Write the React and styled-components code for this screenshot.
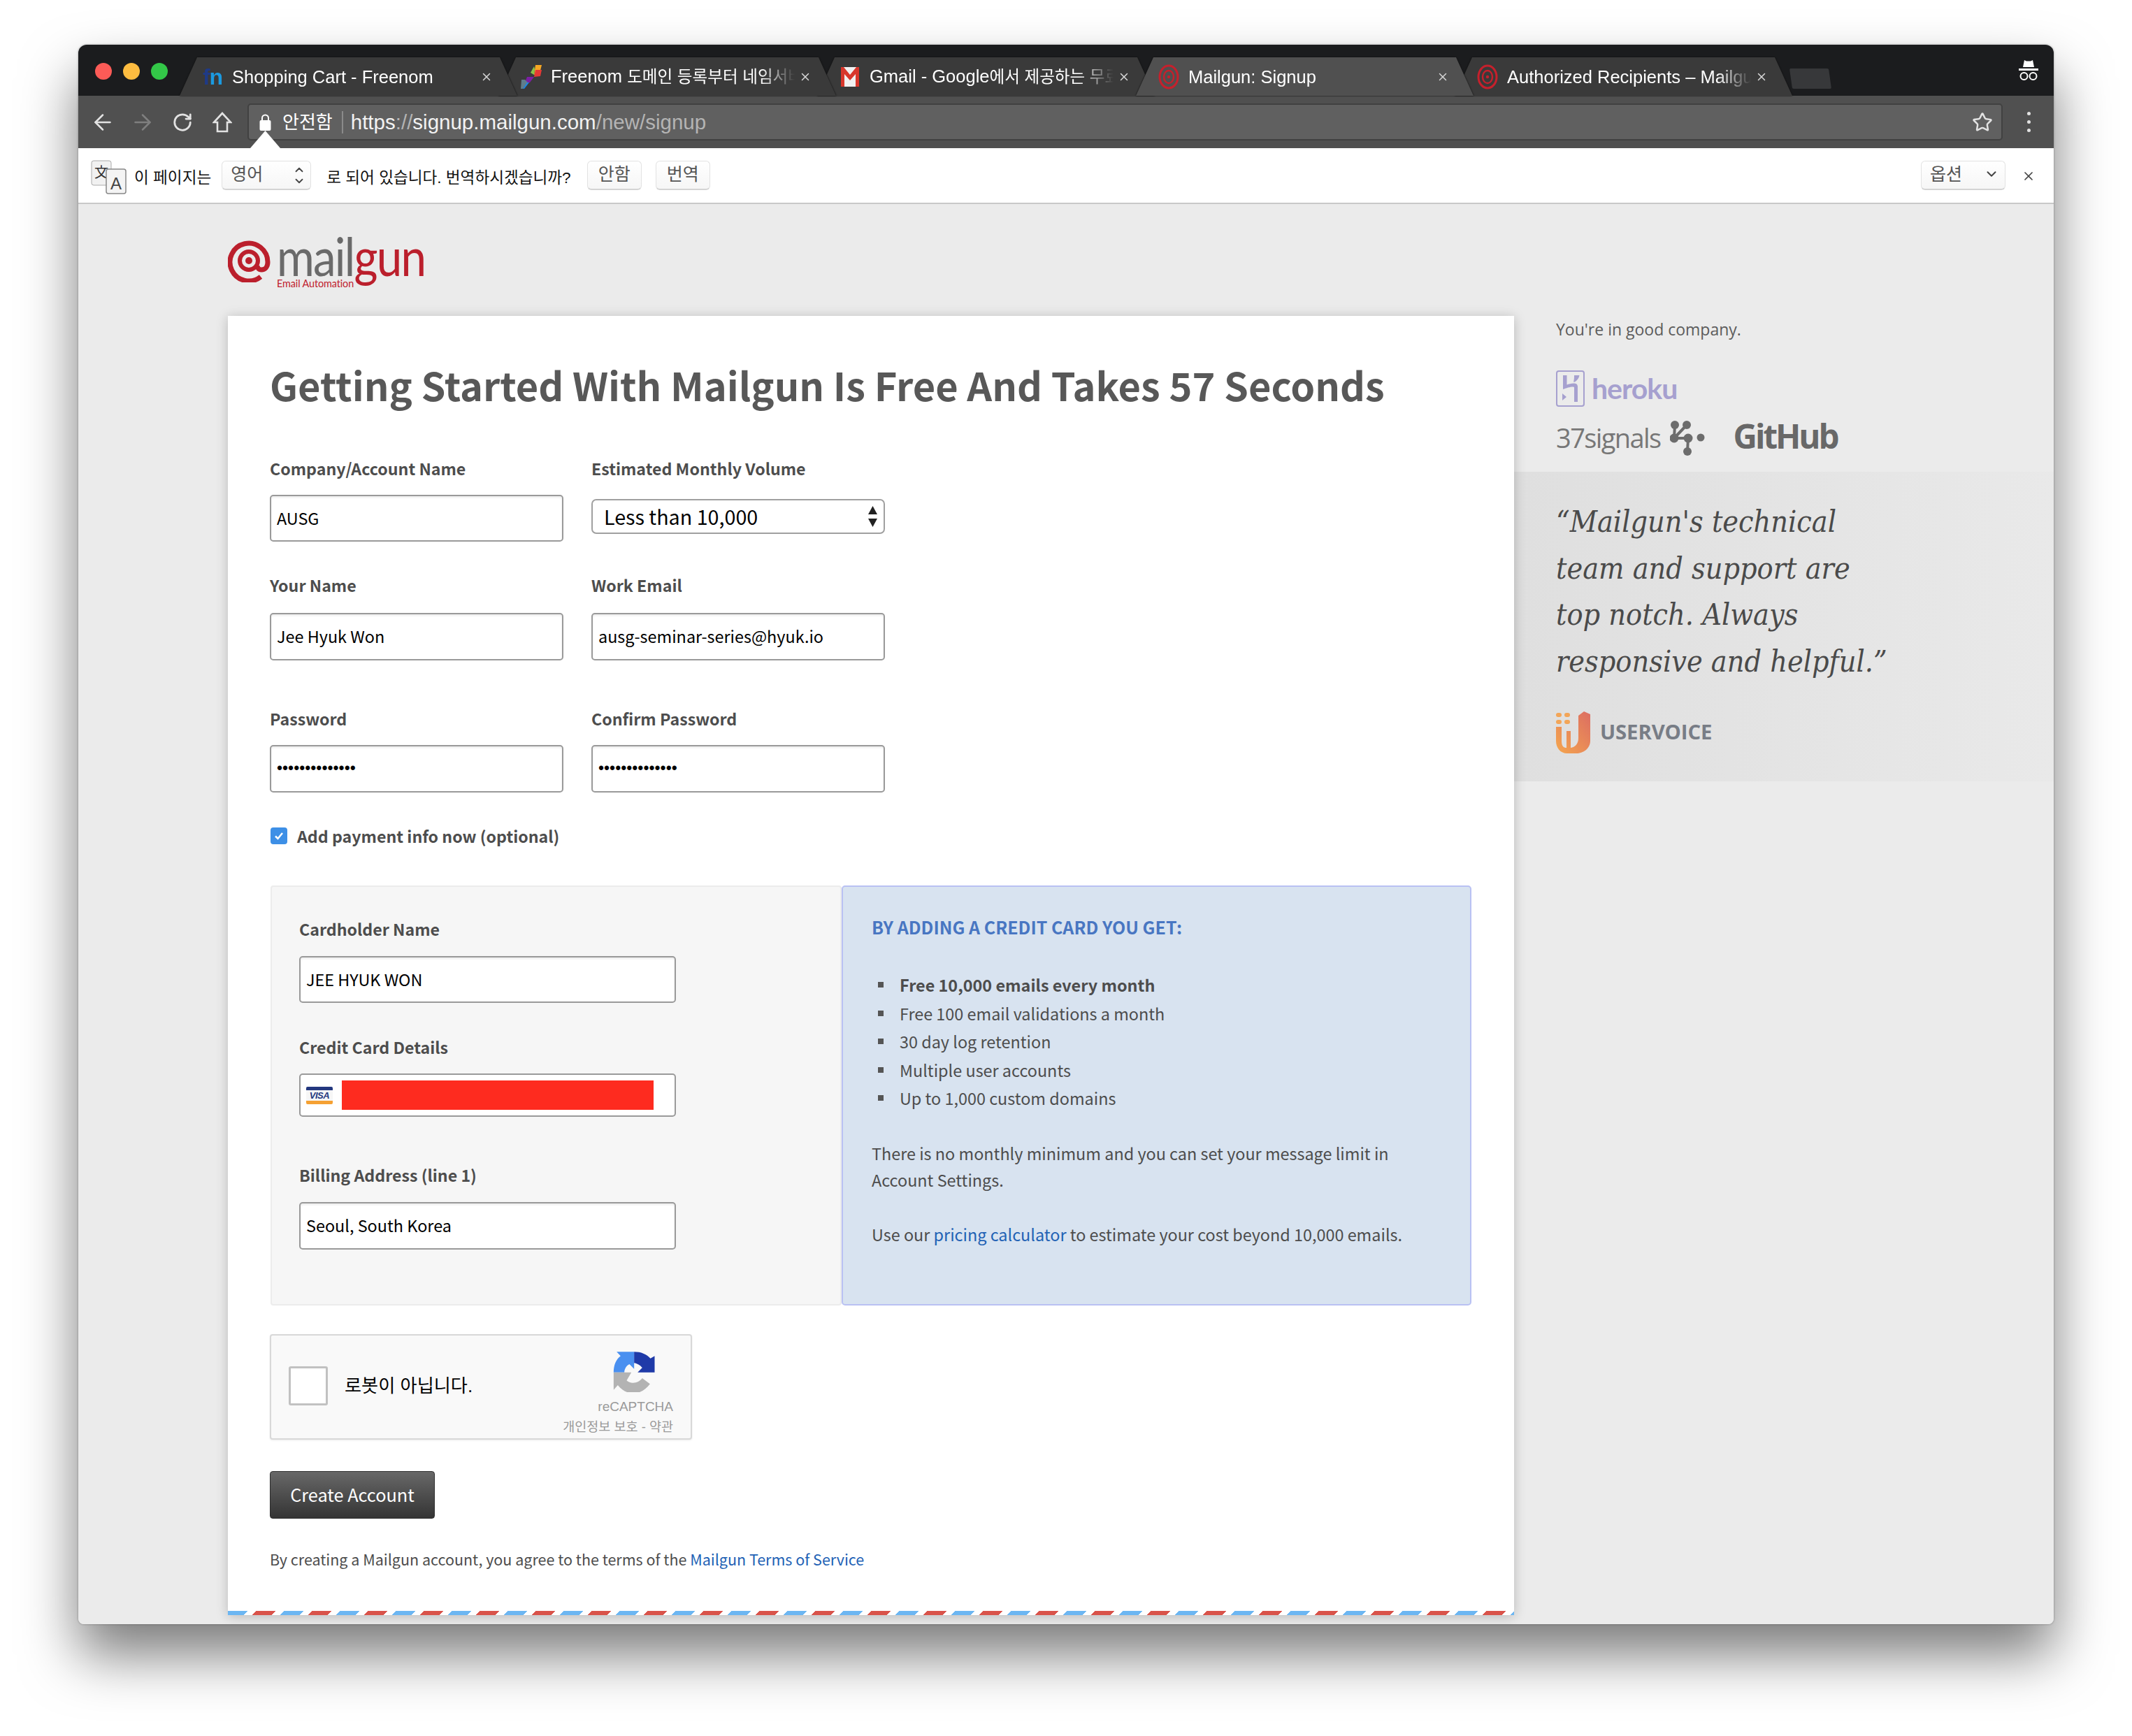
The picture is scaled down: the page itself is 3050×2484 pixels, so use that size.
import React from "react";
import styled, { createGlobalStyle } from "styled-components";
import { ArrowLeft, ArrowRight, RotateCw, Star, ChevronDown, ChevronUp, X } from "lucide-react";

const UI = `"Liberation Sans","Noto Sans CJK KR",sans-serif`;
const SRC = `"Noto Sans CJK KR","Noto Sans",sans-serif`;

const Global = createGlobalStyle`
  html,body{margin:0;padding:0;background:#fff;}
  *{box-sizing:border-box;}
`;
const Stage = styled.div`
  width:3050px;height:2484px;padding:64px 112px 0;overflow:hidden;background:#fff;
`;
const Win = styled.div`
  width:2826px;height:2260px;border-radius:12px 12px 8px 8px;overflow:hidden;position:relative;
  box-shadow:0 44px 80px rgba(0,0,0,.52),0 0 3px rgba(0,0,0,.35);
  background:#e9e9e9;display:flex;flex-direction:column;
`;
const Strip = styled.div`
  height:73px;background:#1b1c1e;display:flex;align-items:flex-end;padding-left:145px;position:relative;flex:none;
`;
const Lights = styled.div`
  position:absolute;left:24px;top:26px;display:flex;gap:16px;
`;
const Light = styled.i`
  display:block;width:24px;height:24px;border-radius:50%;background:${p=>p.$c};
`;
const TabWrap = styled.div`
  width:483px;height:55px;flex:none;margin-left:${p=>p.$first?0:-27}px;position:relative;z-index:${p=>p.$z};
  filter:drop-shadow(0 0 1px #0c0c0c);
`;
const TabBody = styled.div`
  width:100%;height:100%;background:${p=>p.$active?"#505050":"#3a3a3a"};
  clip-path:polygon(0 100%,25px 0,458px 0,483px 100%);
  display:flex;align-items:center;padding:0 35px 0 31px;color:#fff;
  font:25.5px/30px ${UI};
`;
const Fav = styled.div`
  width:32px;height:34px;flex:none;margin-right:12px;display:flex;align-items:center;justify-content:center;position:relative;
`;
const Title = styled.div`
  flex:1;min-width:0;white-space:nowrap;overflow:hidden;
  ${p=>p.$fade?"-webkit-mask-image:linear-gradient(90deg,#000 86%,transparent 100%);mask-image:linear-gradient(90deg,#000 86%,transparent 100%);":""}
`;
const Ko = styled.span`font-size:23.6px;`;
const TabClose = styled(X)`
  width:18px;height:18px;color:#d8d8d8;flex:none;margin-left:6px;
`;
const FnFav = styled.span`
  font:700 32px/34px ${UI};letter-spacing:-1px;color:#1b9ae0;white-space:nowrap;
  & b{color:#1f3a86;font-weight:700;}
`;
const NewTab = styled.div`
  width:56px;height:29px;background:#37383a;transform:skewX(8deg);margin:0 0 10px -2px;flex:none;border-radius:2px;
`;
const Spy = styled.div`
  position:absolute;right:22px;top:22px;width:28px;height:32px;
`;
const Toolbar = styled.div`
  height:75px;background:#505050;flex:none;display:flex;align-items:center;padding-left:6px;position:relative;
`;
const NavBtn = styled.div`
  width:57px;height:40px;display:flex;align-items:center;justify-content:center;color:${p=>p.$dim?"#7f7f7f":"#e2e2e2"};flex:none;
`;
const Omni = styled.div`
  width:2511px;height:53px;margin-left:8px;background:#606060;border:2px solid #414141;border-radius:5px;
  display:flex;align-items:center;padding-left:15px;flex:none;
`;
const LockBox = styled.div`
  width:20px;flex:none;margin-right:13px;display:flex;
`;
const Secure = styled.span`
  font:26px/32px ${UI};color:#fff;padding-right:13px;border-right:2px solid #8a8a8a;margin-right:11px;
`;
const Url = styled.span`
  font:29.5px/34px ${UI};color:#b4b4b4;white-space:nowrap;flex:1;
  & b{font-weight:400;color:#f2f2f2;}
`;
const OmniStar = styled(Star)`
  color:#e2e2e2;width:30px;height:30px;margin-right:12px;flex:none;
`;
const Dots = styled.div`
  display:flex;flex-direction:column;gap:7px;margin-left:35px;flex:none;
  & i{display:block;width:5px;height:5px;border-radius:50%;background:#e2e2e2;}
`;
const Notch = styled.div`
  position:absolute;left:246px;bottom:0;width:43px;height:25px;background:#fff;clip-path:polygon(0 100%,50% 0,100% 100%);
`;
const Info = styled.div`
  height:80px;flex:none;background:#fff;border-bottom:2px solid #c8c8c8;display:flex;align-items:flex-start;
  font:22.6px/28px ${UI};color:#111;padding:17px 0 0 18px;
`;
const TransIcon = styled.svg`
  width:52px;height:50px;flex:none;margin-right:10px;
`;
const InfoText = styled.span`
  margin-top:12px;white-space:nowrap;flex:none;
`;
const InfoSelect = styled.div`
  width:${p=>p.$w}px;height:42px;border:1px solid #e2e2e2;border-bottom:2px solid #d4d4d4;border-radius:6px;background:linear-gradient(#fff,#f6f6f6);
  margin:1px ${p=>p.$mr||0}px 0 ${p=>p.$ml||0}px;padding:0 8px 3px 12px;display:flex;align-items:center;justify-content:space-between;color:#555;flex:none;
  font-size:25px;
`;
const Updown = styled.div`
  display:flex;flex-direction:column;color:#444;margin-right:-2px;margin-top:3px;
  & svg{width:20px;height:18px;margin:-1px 0;}
`;
const InfoBtn = styled.div`
  width:78px;height:42px;border:1px solid #e2e2e2;border-bottom:2px solid #d4d4d4;border-radius:6px;background:linear-gradient(#fff,#f6f6f6);
  margin:1px 0 0 ${p=>p.$ml}px;padding-bottom:3px;display:flex;align-items:center;justify-content:center;color:#555;flex:none;font-size:25px;
`;
const Spacer = styled.div`flex:1;`;
const InfoClose = styled(X)`
  width:20px;height:20px;color:#444;margin:13px 26px 0 23px;flex:none;
`;
const Page = styled.div`
  flex:1;min-height:0;padding:0 0 0 214px;background:#ebebeb;display:flex;flex-direction:column;overflow:hidden;
`;
const LogoRow = styled.div`
  height:160px;flex:none;display:flex;align-items:flex-start;padding-top:50px;position:relative;
`;
const LogoWrap = styled.div`
  margin-left:8px;width:213px;height:80px;position:relative;margin-top:-17px;flex:none;
`;
const LogoWord = styled.div`
  font:400 76px/82px "Lato",sans-serif;letter-spacing:-2px;color:#6a6a6a;white-space:nowrap;
  transform:scaleX(.86);transform-origin:0 0;
  & b{font-weight:400;color:#bb1f2c;}
`;
const LogoSub = styled.span`
  position:absolute;left:0;top:73px;font:14.4px/16px "Lato",sans-serif;letter-spacing:-.1px;color:#c0212e;white-space:nowrap;
`;
const Main = styled.div`
  display:flex;flex:none;align-items:flex-start;
`;
const Card = styled.main`
  width:1840px;height:1859px;background:#fff;flex:none;padding:60px 60px 0;box-shadow:0 2px 16px rgba(0,0,0,.22);
  font-family:${SRC};color:#505050;display:flex;flex-direction:column;position:relative;
`;
const H1 = styled.h1`
  margin:0 0 68px;font:600 55.9px/76px ${SRC};color:#585858;white-space:nowrap;
`;
const Grid = styled.div`
  display:grid;grid-template-columns:420px 420px;column-gap:40px;margin-bottom:${p=>p.$mb||0}px;
`;
const Field = styled.div`display:flex;flex-direction:column;`;
const Label = styled.label`
  font:700 23.2px/28px ${SRC};color:#4d4d4d;margin-bottom:${p=>p.$mb||24}px;white-space:nowrap;display:block;
`;
const Input = styled.input`
  display:block;width:${p=>p.$w||420}px;height:${p=>p.$h||68}px;border:2px solid #9a9a9a;border-radius:5px;background:#fff;
  box-shadow:inset 0 2px 3px rgba(0,0,0,.08);padding:0 8px 2px;font:400 23.4px/30px ${SRC};color:#000;outline:none;
`;
const PasswordInput = styled(Input)`
  font:400 23px/30px "Liberation Sans",sans-serif;
`;
const SelectBox = styled.div`
  width:420px;height:50px;margin:6px 0 0;border:2px solid #a0a0a0;border-radius:7px;background:#fff;display:flex;align-items:center;
  justify-content:space-between;padding:0 8px 0 16px;font:400 28.7px/36px ${SRC};color:#000;
`;
const Check = styled.div`
  display:flex;align-items:center;gap:14px;height:30px;margin-top:47px;font:700 23.2px/30px ${SRC};color:#4d4d4d;
`;
const CheckBox = styled.span`
  width:24px;height:24px;border-radius:4px;background:#3d8fe6;display:flex;align-items:center;justify-content:center;margin-left:1px;flex:none;
`;
const Panels = styled.div`
  display:grid;grid-template-columns:817px 901px;height:601px;margin:56px 0 0 1px;flex:none;
`;
const CardPanel = styled.section`
  background:#f6f6f6;border:2px solid #ececec;border-radius:4px;padding:46px 0 0 39px;
`;
const PanelField = styled.div`margin-bottom:${p=>p.$mb}px;`;
const CardNum = styled.div`
  width:539px;height:62px;border:2px solid #9a9a9a;border-radius:5px;background:#fff;display:flex;align-items:center;padding-left:8px;
`;
const Redact = styled.div`
  width:446px;height:42px;background:#fe2b1f;margin-left:13px;
`;
const BluePanel = styled.section`
  background:#d8e3f0;border:2px solid #b9c1f3;border-radius:5px;padding:40px 0 0 41px;font:400 23.4px/37px ${SRC};color:#4d4d4d;
`;
const BlueTitle = styled.h3`
  margin:0 0 46px;font:700 25px/34px ${SRC};color:#4876c2;white-space:nowrap;
`;
const List = styled.ul`
  list-style:none;margin:0 0 39px;padding:0 0 0 40px;
`;
const Li = styled.li`
  height:40.5px;line-height:40px;position:relative;white-space:nowrap;font-weight:${p=>p.$b?700:400};
  &::before{content:"";position:absolute;left:-31px;top:16px;width:8px;height:8px;background:#555;}
`;
const Para = styled.p`
  margin:0 0 ${p=>p.$mb||0}px;width:810px;line-height:38.5px;
`;
const A = styled.span`color:#2262b5;`;
const Captcha = styled.div`
  width:604px;height:151px;margin:41px 0 0;background:#f9f9f9;border:2px solid #d8d8d8;border-radius:4px;box-shadow:0 1px 3px rgba(0,0,0,.08);
  display:flex;align-items:center;padding:0 0 4px 25px;position:relative;flex:none;font-family:${UI};
`;
const CapBox = styled.div`
  width:56px;height:56px;background:#fff;border:3px solid #c1c1c1;border-radius:3px;flex:none;
`;
const CapText = styled.span`
  font:26.2px/34px ${UI};color:#000;margin-left:24px;
`;
const CapBrand = styled.div`
  position:absolute;right:25px;top:21px;display:flex;flex-direction:column;align-items:flex-end;color:#8f8f8f;
`;
const CapLogo = styled.svg`
  width:62px;height:60px;margin:0 24px 8px 0;
`;
const CapName = styled.span`font:19px/26px ${UI};color:#9a9a9a;`;
const CapSmall = styled.span`font:18.5px/26px ${UI};color:#9a9a9a;margin-top:3px;`;
const Btn = styled.button`
  width:236px;height:68px;margin:45px 0 0;border:1px solid #2e2e2e;border-radius:4px;background:linear-gradient(#686868,#343434);
  color:#fff;font:400 25.3px/34px ${SRC};padding:0 0 3px;flex:none;
`;
const Terms = styled.p`
  margin:43px 0 0;font:400 21.5px/30px ${SRC};color:#4d4d4d;white-space:nowrap;
`;
const Stripes = styled.div`
  position:absolute;left:0;right:0;bottom:0;height:6px;
  background:repeating-linear-gradient(135deg,#6cb6f2 0,#6cb6f2 19.8px,#fff 19.8px,#fff 28.3px,#d9534a 28.3px,#d9534a 48.1px,#fff 48.1px,#fff 56.57px);
`;
const Side = styled.aside`
  flex:1;padding-top:4px;
`;
const SideIntro = styled.p`
  margin:0 0 44px 60px;font:400 23px/30px "Open Sans",sans-serif;color:#5c5c5c;white-space:nowrap;
`;
const LogoLine = styled.div`
  display:flex;align-items:center;height:${p=>p.$h}px;margin:0 0 ${p=>p.$mb||0}px 60px;
`;
const Heroku = styled.span`
  font:700 41px/50px "Lato",sans-serif;color:#a6a0cf;margin-left:10px;letter-spacing:-1px;
`;
const Signals = styled.span`
  font:400 38px/48px "Open Sans",sans-serif;letter-spacing:-1.6px;color:#777;margin-top:-3px;
`;
const GitHub = styled.span`
  font:700 47.5px/50px "Open Sans",sans-serif;letter-spacing:-3px;color:#686868;margin:-6px 0 0 41px;
`;
const Quote = styled.blockquote`
  margin:23px 0 0;height:443px;padding:38px 0 0 60px;background:linear-gradient(90deg,#dfdfdf,#e5e5e5 60%,#e9e9e9);
`;
const QuoteText = styled.div`
  font:italic 400 42.7px/66.5px "DejaVu Serif Condensed","DejaVu Serif",serif;color:#4a4a4a;white-space:nowrap;
`;
const UV = styled.div`
  display:flex;align-items:center;margin-top:38px;height:62px;
`;
const UVText = styled.span`
  font:700 29.3px/40px "Open Sans",sans-serif;letter-spacing:-.1px;color:#787d86;margin:-3px 0 0 14px;
`;

const Spiral = ({s=30}) => (
  <svg width={s} height={s*1.2} viewBox="0 0 30 36" fill="none" stroke="#c6202c">
    <ellipse cx="15" cy="18" rx="13" ry="16" strokeWidth="3"/>
    <ellipse cx="15" cy="18" rx="7" ry="9" strokeWidth="2.4"/>
    <circle cx="15" cy="18" r="2.2" fill="#c6202c" stroke="none"/>
  </svg>
);
const tabs = [
  { t: "Shopping Cart - Freenom", f: <FnFav><b>f</b>n</FnFav> },
  { t: <>Freenom <Ko>도메인 등록부터 네임서버</Ko></>, fade: 1, f: (
    <svg width="32" height="36" viewBox="0 0 32 36"><path d="M22 1h9l-3 12-8 2z" fill="#f5a623"/><path d="M20 3l-5 9 5 3 1-8z" fill="#8bc34a"/><path d="M22 8h9l-2 9-9 1z" fill="#e53935"/><path d="M10 18h10l-6 8-8 2z" fill="#7b1fa2"/><path d="M2 22h5l4 4-7 9H1z" fill="#607d8b"/><path d="M4 35l6-9 3 0-7 9z" fill="#1e88e5"/></svg>
  )},
  { t: <>Gmail - Google<Ko>에서 제공하는 무료</Ko></>, fade: 1, f: (
    <svg width="26" height="28" viewBox="0 0 26 28"><rect width="26" height="28" fill="#f1f1f1"/><path d="M0 0h4l9 11 9-11h4v28h-5V10l-8 9-8-9v18H0z" fill="#d8372c"/></svg>
  )},
  { t: "Mailgun: Signup", active: 1, f: <Spiral/> },
  { t: "Authorized Recipients – Mailgun", fade: 1, f: <Spiral/> },
];

export default function App() {
  return (
    <Stage>
      <Global/>
      <Win>
        <Strip>
          <Lights>
            <Light $c="#fc5b57"/><Light $c="#fdbc40"/><Light $c="#33c748"/>
          </Lights>
          {tabs.map((tb,i)=>(
            <TabWrap key={i} $first={i===0} $z={tb.active?10:6-i}>
              <TabBody $active={tb.active}>
                <Fav>{tb.f}</Fav>
                <Title $fade={tb.fade}>{tb.t}</Title>
                <TabClose strokeWidth={2}/>
              </TabBody>
            </TabWrap>
          ))}
          <NewTab/>
          <Spy>
            <svg width="28" height="32" viewBox="0 0 28 32" fill="#fff">
              <path d="M8 0l3 1.500h6L20 0l2 10H6z"/><rect x="0" y="12" width="28" height="3"/>
              <circle cx="7.500" cy="23" r="5" fill="none" stroke="#fff" strokeWidth="2"/>
              <circle cx="20.500" cy="23" r="5" fill="none" stroke="#fff" strokeWidth="2"/>
            </svg>
          </Spy>
        </Strip>
        <Toolbar>
          <NavBtn><ArrowLeft size={36} strokeWidth={1.7}/></NavBtn>
          <NavBtn $dim><ArrowRight size={36} strokeWidth={1.7}/></NavBtn>
          <NavBtn><RotateCw size={30} strokeWidth={2.2}/></NavBtn>
          <NavBtn>
            <svg width="28" height="30" viewBox="0 0 28 30" fill="none" stroke="#e2e2e2" strokeWidth="2.600"><path d="M14 2L2 15h5v13h14V15h5z"/></svg>
          </NavBtn>
          <Omni>
            <LockBox>
              <svg width="17" height="26" viewBox="0 0 17 26" fill="#fff"><path d="M3 10V7a5.500 5.500 0 0 1 11 0v3h-2V7a3.500 3.500 0 0 0-7 0v3z"/><rect x="0.500" y="10" width="16" height="15" rx="2"/></svg>
            </LockBox>
            <Secure>안전함</Secure>
            <Url><b>https</b>://<b>signup.mailgun.com</b>/new/signup</Url>
            <OmniStar strokeWidth={2}/>
          </Omni>
          <Dots><i/><i/><i/></Dots>
          <Notch/>
        </Toolbar>
        <Info>
          <TransIcon viewBox="0 0 52 50">
            <rect x="1" y="1" width="28" height="35" rx="3" fill="#f1f1f1" stroke="#aaa"/>
            <text x="15" y="25" fontSize="20" textAnchor="middle" fontFamily="Noto Sans CJK KR" fill="#333">文</text>
            <rect x="22" y="13" width="28" height="35" rx="3" fill="#f4f4f4" stroke="#888" strokeWidth="1.500"/>
            <text x="36" y="42" fontSize="24" textAnchor="middle" fontFamily="Liberation Sans" fill="#444">A</text>
          </TransIcon>
          <InfoText>이 페이지는</InfoText>
          <InfoSelect $w={128} $ml={15} $mr={22}>
            영어
            <Updown><ChevronUp strokeWidth={2.4}/><ChevronDown strokeWidth={2.4}/></Updown>
          </InfoSelect>
          <InfoText>로 되어 있습니다. 번역하시겠습니까?</InfoText>
          <InfoBtn $ml={23}>안함</InfoBtn>
          <InfoBtn $ml={20}>번역</InfoBtn>
          <Spacer/>
          <InfoSelect $w={121}>
            옵션
            <ChevronDown size={22} strokeWidth={2.2} color="#444"/>
          </InfoSelect>
          <InfoClose strokeWidth={2}/>
        </Info>
        <Page>
          <LogoRow>
            <svg width="62" height="62" viewBox="0 0 62 62" fill="none" stroke="#bb1f2c">
              <path d="M47 54A27 27 0 1 1 57 33c0 7-4 11-9 11-4 0-6-3-6-6" strokeWidth="7"/>
              <circle cx="30" cy="31" r="13" strokeWidth="6"/>
              <circle cx="30" cy="31" r="5" fill="#bb1f2c" stroke="none"/>
            </svg>
            <LogoWrap>
              <LogoWord>mail<b>gun</b></LogoWord>
              <LogoSub>Email Automation</LogoSub>
            </LogoWrap>
          </LogoRow>
          <Main>
            <Card>
              <H1>Getting Started With Mailgun Is Free And Takes 57 Seconds</H1>
              <Grid $mb={48}>
                <Field><Label>Company/Account Name</Label><Input $h={67} readOnly value="AUSG"/></Field>
                <Field>
                  <Label>Estimated Monthly Volume</Label>
                  <SelectBox>
                    Less than 10,000
                    <svg width="15" height="32" viewBox="0 0 15 32" fill="#222"><path d="M7.500 1L14 13H1zM7.500 31L1 19h13z"/></svg>
                  </SelectBox>
                </Field>
              </Grid>
              <Grid $mb={69}>
                <Field><Label $mb={26}>Your Name</Label><Input readOnly value="Jee Hyuk Won"/></Field>
                <Field><Label $mb={26}>Work Email</Label><Input readOnly value="ausg-seminar-series@hyuk.io"/></Field>
              </Grid>
              <Grid>
                <Field><Label>Password</Label><PasswordInput type="password" readOnly value="xxxxxxxxxxxxxx"/></Field>
                <Field><Label>Confirm Password</Label><PasswordInput type="password" readOnly value="xxxxxxxxxxxxxx"/></Field>
              </Grid>
              <Check>
                <CheckBox>
                  <svg width="18" height="18" viewBox="0 0 18 18" fill="none" stroke="#fff" strokeWidth="2.500"><path d="M4 9.500l3.500 3.500L14 5"/></svg>
                </CheckBox>
                Add payment info now (optional)
              </Check>
              <Panels>
                <CardPanel>
                  <PanelField $mb={49}>
                    <Label $mb={25}>Cardholder Name</Label>
                    <Input $w={539} $h={67} readOnly value="JEE HYUK WON"/>
                  </PanelField>
                  <PanelField $mb={69}>
                    <Label>Credit Card Details</Label>
                    <CardNum>
                      <svg width="38" height="25" viewBox="0 0 38 25">
                        <rect width="38" height="25" rx="2" fill="#f6f6f6"/>
                        <path d="M0 5V2a2 2 0 0 1 2-2h34a2 2 0 0 1 2 2v3z" fill="#24387f"/>
                        <path d="M0 20v3a2 2 0 0 0 2 2h34a2 2 0 0 0 2-2v-3z" fill="#f5a133"/>
                        <text x="19" y="17" fontSize="13" fontWeight="700" fontStyle="italic" textAnchor="middle" fontFamily="Liberation Sans" fill="#24387f" letterSpacing="-.5">VISA</text>
                      </svg>
                      <Redact/>
                    </CardNum>
                  </PanelField>
                  <PanelField $mb={0}>
                    <Label $mb={25}>Billing Address (line 1)</Label>
                    <Input $w={539} readOnly value="Seoul, South Korea"/>
                  </PanelField>
                </CardPanel>
                <BluePanel>
                  <BlueTitle>BY ADDING A CREDIT CARD YOU GET:</BlueTitle>
                  <List>
                    <Li $b>Free 10,000 emails every month</Li>
                    <Li>Free 100 email validations a month</Li>
                    <Li>30 day log retention</Li>
                    <Li>Multiple user accounts</Li>
                    <Li>Up to 1,000 custom domains</Li>
                  </List>
                  <Para $mb={39}>There is no monthly minimum and you can set your message limit in Account Settings.</Para>
                  <Para>Use our <A>pricing calculator</A> to estimate your cost beyond 10,000 emails.</Para>
                </BluePanel>
              </Panels>
              <Captcha>
                <CapBox/>
                <CapText>로봇이 아닙니다.</CapText>
                <CapBrand>
                  <CapLogo viewBox="30 15 185 180">
                    <path d="M120 22H45L62 40C42 55 32 80 32 110H78C78 95 88 80 100 75L120 95Z" fill="#4a90f0"/>
                    <path d="M120 22C150 22 172 32 190 50L208 40V110H135L155 90C148 82 135 72 120 70Z" fill="#1f3aa8"/>
                    <path d="M32 110V185L50 165C70 190 95 200 115 200C145 200 170 185 188 160L155 135C145 148 130 155 115 155C105 155 95 152 88 145L108 110Z" fill="#b3b3b3"/>
                  </CapLogo>
                  <CapName>reCAPTCHA</CapName>
                  <CapSmall>개인정보 보호 - 약관</CapSmall>
                </CapBrand>
              </Captcha>
              <Btn>Create Account</Btn>
              <Terms>By creating a Mailgun account, you agree to the terms of the <A>Mailgun Terms of Service</A></Terms>
              <Stripes/>
            </Card>
            <Side>
              <SideIntro>You're in good company.</SideIntro>
              <LogoLine $h={52} $mb={20}>
                <svg width="41" height="52" viewBox="0 0 41 52" fill="none">
                  <rect x="1" y="1" width="39" height="50" rx="3" stroke="#a6a0cf" strokeWidth="2"/>
                  <path d="M10 7h5.500v13.500c5-2 16-4.500 15.500 3V45h-5V24.500c0-2.500-10 0-16 2.500zM26 7h7.500c-.5 4-3 7-6.500 9.500h-2C26 13 26 10 26 7z" fill="#a6a0cf"/>
                  <path d="M9 33l6 5-6 5z" fill="#a6a0cf"/>
                </svg>
                <Heroku>heroku</Heroku>
              </LogoLine>
              <LogoLine $h={50}>
                <Signals>37signals</Signals>
                <svg width="50" height="50" viewBox="0 0 50 50" fill="#6c6c6c" style={{marginLeft:13}}>
                  <circle cx="7" cy="6" r="6"/><circle cx="24" cy="6" r="6"/><circle cx="6" cy="25" r="6.500"/><circle cx="26" cy="25" r="6.500"/>
                  <circle cx="44" cy="24" r="5.500"/><circle cx="25" cy="44" r="6"/>
                  <path d="M7 6L6 25M24 6L6 25M6 25H26M26 25L25 44" stroke="#6c6c6c" strokeWidth="4"/>
                </svg>
                <GitHub>GitHub</GitHub>
              </LogoLine>
              <Quote>
                <QuoteText>“Mailgun's technical<br/>team and support are<br/>top notch. Always<br/>responsive and helpful.”</QuoteText>
                <UV>
                  <svg width="49" height="60" viewBox="0 0 49 60">
                    <defs><linearGradient id="uvg" x1="0" y1="1" x2="1" y2="0"><stop offset="0" stopColor="#f5a64e"/><stop offset="1" stopColor="#dc6d62"/></linearGradient></defs>
                    <g fill="#f3a558"><rect x="0" y="2" width="8" height="6" rx="3"/><rect x="12" y="2" width="8" height="6" rx="3"/><rect x="0" y="12" width="8" height="6" rx="3"/><rect x="12" y="12" width="8" height="6" rx="3"/></g>
                    <path d="M0 22h8v20c0 8 3 10 7 10V28h6v24c6-1 11-5 11-14V6l8-6 9 4v38c0 11-10 18-20 18H16C6 60 0 52 0 42z" fill="url(#uvg)"/>
                  </svg>
                  <UVText>USERVOICE</UVText>
                </UV>
              </Quote>
            </Side>
          </Main>
        </Page>
      </Win>
    </Stage>
  );
}
